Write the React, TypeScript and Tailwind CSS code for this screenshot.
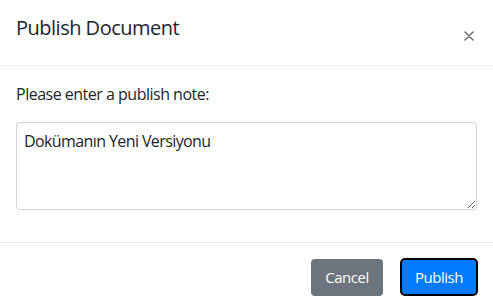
import React from "react";

export default function App() {
  return (
    <div
      className="w-[493px] h-[308px] bg-white text-[#212529] flex flex-col overflow-hidden tracking-[-0.5px]"
      style={{ fontFamily: '"Open Sans", "Noto Sans", sans-serif' }}
    >
      <div className="h-[66px] border-b border-[#e9ecef] flex items-start justify-between pl-4 pr-[19px]">
        <h5 className="pt-[13px] text-[20px] leading-[30px] font-medium">Publish Document</h5>
        <button className="mt-[31px] w-[10px] h-[10px] flex items-center justify-center" aria-label="Close">
          <svg width="10" height="10" viewBox="0 0 10 10">
            <path d="M1 1L9 9M9 1L1 9" stroke="#6b6b6b" strokeWidth="1.5" strokeLinecap="round" />
          </svg>
        </button>
      </div>
      <div className="px-4 flex flex-col">
        <label className="mt-[16px] text-[16px] leading-[24px]">Please enter a publish note:</label>
        <textarea
          className="mt-[16px] w-[461px] h-[88px] border border-[#ced4da] rounded-[4px] pt-[6px] pl-[7px] text-[16px] leading-[24px] tracking-[-0.6px] text-[#212529] outline-none"
          defaultValue="Dokümanın Yeni Versiyonu"
        />
      </div>
      <div className="mt-[32px] border-t border-[#e9ecef] flex justify-end items-center pr-[15px] pt-[15px] gap-[17px]">
        <button className="w-[72px] h-[37px] rounded-[4px] bg-[#6c757d] text-white text-[15px] leading-[20px]">Cancel</button>
        <button className="w-[78px] h-[38px] rounded-[5px] border-2 border-black bg-[#007bff] text-white text-[15px] leading-[20px]">Publish</button>
      </div>
    </div>
  );
}
